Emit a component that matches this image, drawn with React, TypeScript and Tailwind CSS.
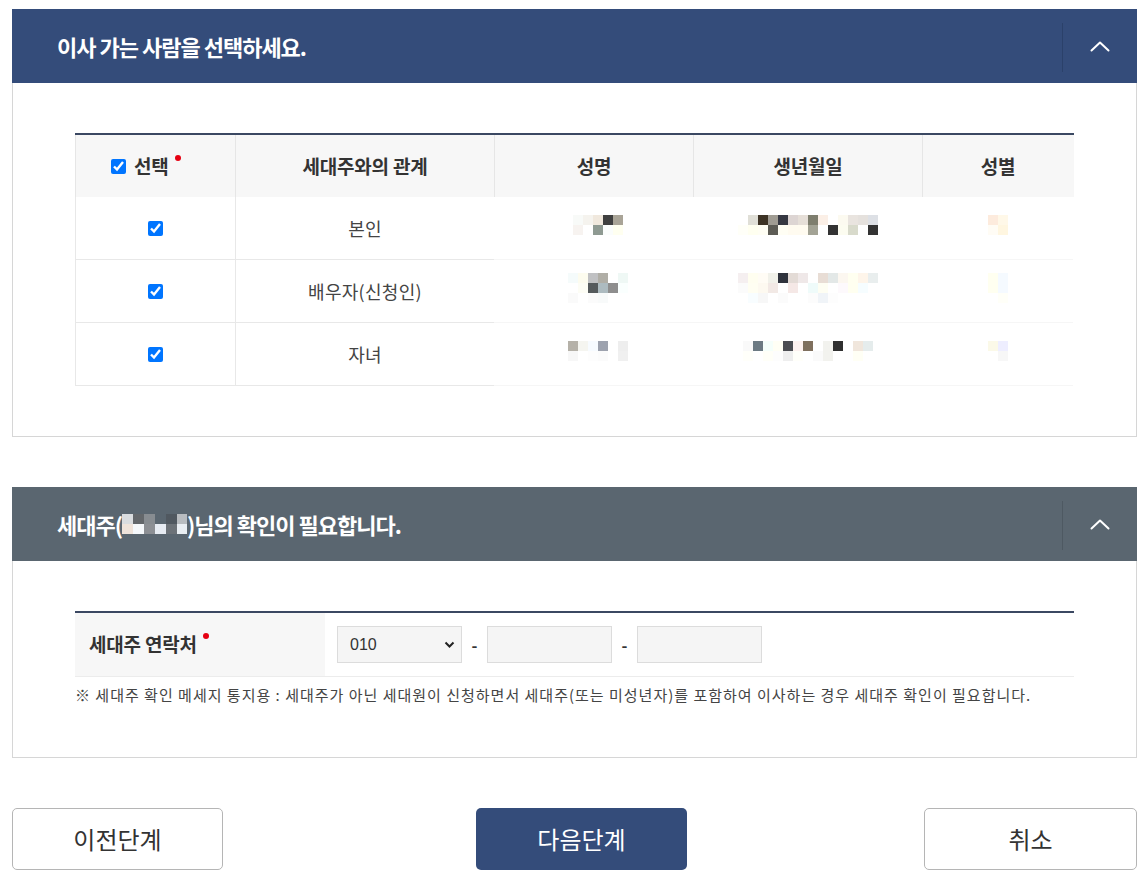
import React from "react";

type Cell = string;
type Mosaic = Cell[][];

const rows: { rel: string; name: Mosaic; birth: Mosaic; gender: Mosaic }[] = [
  {
    rel: "본인",
    name: [
      ["bg-[#f8faf8]", "bg-[#f5f3ee]", "bg-[#f0e8dd]", "bg-[#3f3f3f]", "bg-[#a9a497]"],
      ["bg-[#f7f3f0]", "bg-[#ffffff]", "bg-[#8f9a92]", "bg-[#fbfdfc]", "bg-[#fffff0]"],
    ],
    birth: [
      ["bg-[#ffffff]", "bg-[#e0dfd7]", "bg-[#3d3325]", "bg-[#a09c93]", "bg-[#363842]", "bg-[#ddd5d3]", "bg-[#e6dfd8]", "bg-[#7e7e6e]", "bg-[#fbefe6]", "bg-[#ffffff]", "bg-[#fcfaf0]", "bg-[#e9e4df]", "bg-[#e5e1dd]", "bg-[#dde0e5]"],
      ["bg-[#fffff8]", "bg-[#fffff0]", "bg-[#fffef4]", "bg-[#5d5c55]", "bg-[#fffef4]", "bg-[#fffbf0]", "bg-[#fffbf0]", "bg-[#a3a395]", "bg-[#ffffff]", "bg-[#333333]", "bg-[#fcfcf0]", "bg-[#d8dacb]", "bg-[#ffffff]", "bg-[#333333]"],
    ],
    gender: [
      ["bg-[#fdebdd]", "bg-[#fff8e8]"],
      ["bg-[#fffcf5]", "bg-[#fff6e0]"],
    ],
  },
  {
    rel: "배우자(신청인)",
    name: [
      ["bg-[#f5fbfb]", "bg-[#fdfcef]", "bg-[#c0c1c3]", "bg-[#b0aea6]", "bg-[#ffffff]", "bg-[#eff8f5]"],
      ["bg-[#ffffff]", "bg-[#fdfdf5]", "bg-[#555a5c]", "bg-[#adbbc0]", "bg-[#8e8e8e]", "bg-[#fafffe]"],
      ["bg-[#fafafa]", "bg-[#ffffff]", "bg-[#fbfbfb]", "bg-[#f8fafa]", "bg-[#ffffff]", "bg-[#ffffff]"],
    ],
    birth: [
      ["bg-[#f5eff0]", "bg-[#fffef0]", "bg-[#fffcf5]", "bg-[#f1f1ea]", "bg-[#2f333d]", "bg-[#e3dbd6]", "bg-[#efe8e8]", "bg-[#ffffff]", "bg-[#e8ddd5]", "bg-[#e3e8e7]", "bg-[#fcf7f0]", "bg-[#fffff0]", "bg-[#fef5ea]", "bg-[#e9eeee]"],
      ["bg-[#fbfbfb]", "bg-[#fffef2]", "bg-[#fdf9f0]", "bg-[#f2e9e5]", "bg-[#ffffff]", "bg-[#f5e8e6]", "bg-[#ffffff]", "bg-[#effbfa]", "bg-[#fefef3]", "bg-[#ffffff]", "bg-[#fdf9fc]", "bg-[#fffff0]", "bg-[#f6fdff]", "bg-[#ffffff]"],
      ["bg-[#ffffff]", "bg-[#f8fdff]", "bg-[#f7f7f7]", "bg-[#ffffff]", "bg-[#fbfbfb]", "bg-[#ffffff]", "bg-[#ffffff]", "bg-[#fcfcfc]", "bg-[#f0f4f8]", "bg-[#fdfdfd]", "bg-[#ffffff]", "bg-[#ffffff]", "bg-[#ffffff]", "bg-[#ffffff]"],
    ],
    gender: [
      ["bg-[#fffff0]", "bg-[#f5faff]"],
      ["bg-[#fffff0]", "bg-[#f5faff]"],
      ["bg-[#ffffff]", "bg-[#fffff8]"],
    ],
  },
  {
    rel: "자녀",
    name: [
      ["bg-[#b5b1a8]", "bg-[#f5f5f0]", "bg-[#f7fbff]", "bg-[#9da2ae]", "bg-[#ffffff]", "bg-[#eeeeee]"],
      ["bg-[#f7f7f7]", "bg-[#ffffff]", "bg-[#fdfdfd]", "bg-[#fbfbfb]", "bg-[#ffffff]", "bg-[#f0f0f0]"],
    ],
    birth: [
      ["bg-[#f9f9f9]", "bg-[#6c7a83]", "bg-[#f5fffb]", "bg-[#fffff5]", "bg-[#4c4d52]", "bg-[#fdf2f0]", "bg-[#7f705e]", "bg-[#ffffff]", "bg-[#f2f2ee]", "bg-[#2f2f2f]", "bg-[#ffffff]", "bg-[#f0e6dc]", "bg-[#e5ecec]"],
      ["bg-[#fffffa]", "bg-[#ffffff]", "bg-[#fffff8]", "bg-[#fdfdfd]", "bg-[#eeeeee]", "bg-[#fffffa]", "bg-[#ffffff]", "bg-[#fafafa]", "bg-[#f2f2ee]", "bg-[#ffffff]", "bg-[#ffffff]", "bg-[#fffff5]", "bg-[#ffffff]"],
    ],
    gender: [
      ["bg-[#fbf9e8]", "bg-[#eeeeff]"],
      ["bg-[#ffffff]", "bg-[#f7f7f7]"],
    ],
  },
];

function MosaicBlock({ m }: { m: Mosaic }) {
  return (
    <div className="flex flex-col">
      {m.map((r, i) => (
        <div key={i} className="flex">
          {r.map((c, j) => (
            <div key={j} className={`h-[10px] w-[10px] ${c}`} />
          ))}
        </div>
      ))}
    </div>
  );
}

function Chevron() {
  return (
    <svg width="20" height="12" viewBox="0 0 20 12" fill="none">
      <polyline points="1.5,10.5 10,2.5 18.5,10.5" stroke="white" strokeWidth="2" strokeLinecap="round" strokeLinejoin="round" />
    </svg>
  );
}

function PanelHeader({ bg, line, children }: { bg: string; line: string; children: React.ReactNode }) {
  return (
    <div className={`flex h-[74px] items-stretch ${bg}`}>
      <h2 className="flex flex-1 items-center pl-[45px] text-[22px] font-bold tracking-[-1px] text-white">{children}</h2>
      <div className={`mt-[14px] mb-[11px] w-px ${line}`} />
      <div className="flex w-[74px] items-center justify-center">
        <Chevron />
      </div>
    </div>
  );
}

function Dot() {
  return <span className="absolute -right-[12px] top-[3px] h-[6px] w-[6px] rounded-full bg-[#e60012]" />;
}

export default function App() {
  return (
    <div className="min-h-screen bg-white pt-[9px] pl-[12px] pr-[6px] font-['Noto_Sans_CJK_KR',sans-serif] text-[#333]">
      {/* Panel 1 */}
      <section>
        <PanelHeader bg="bg-[#344c7a]" line="bg-[#2b416a]">이사 가는 사람을 선택하세요.</PanelHeader>
        <div className="border-x border-b border-[#d6d6d6] px-[62px] pt-[50px] pb-[50px]">
          <div className="border-t-2 border-[#3b4862]">
            <div className="grid h-[62px] grid-cols-[160px_259px_199px_229px_151px] bg-[#f7f7f7] text-[19px] font-bold tracking-[-0.2px] text-[#333]">
              <div className="flex items-center border-l border-[#e6e6e6] pl-[35px]">
                <input type="checkbox" defaultChecked className="h-[15px] w-[15px]" />
                <span className="relative ml-[8px]">
                  선택
                  <Dot />
                </span>
              </div>
              <div className="flex items-center justify-center border-l border-[#e6e6e6]">세대주와의 관계</div>
              <div className="flex items-center justify-center border-l border-[#e6e6e6]">성명</div>
              <div className="flex items-center justify-center border-l border-[#e6e6e6]">생년월일</div>
              <div className="flex items-center justify-center border-l border-[#e6e6e6]">성별</div>
            </div>
            {rows.map((r, i) => (
              <div key={i} className="grid h-[63px] grid-cols-[160px_259px_199px_229px_151px] text-[18px] tracking-[0.3px] text-[#444]">
                <div className="flex items-center justify-center border-b border-l border-[#e8e8e8]">
                  <input type="checkbox" defaultChecked className="h-[15px] w-[15px]" />
                </div>
                <div className="flex items-center justify-center border-b border-l border-[#e8e8e8]">{r.rel}</div>
                <div className="flex items-center justify-center border-b border-[#f6f6f6] pb-[6px] pl-[8px]">
                  <MosaicBlock m={r.name} />
                </div>
                <div className="flex items-center justify-center border-b border-[#f6f6f6] pb-[6px]">
                  <MosaicBlock m={r.birth} />
                </div>
                <div className="flex items-center justify-center border-b border-[#f6f6f6] pb-[6px]">
                  <MosaicBlock m={r.gender} />
                </div>
              </div>
            ))}
          </div>
        </div>
      </section>

      {/* Panel 2 */}
      <section className="mt-[50px]">
        <PanelHeader bg="bg-[#5a6670]" line="bg-[#4e5962]">
          <span>세대주(</span>
          <span className="flex flex-col">
            <span className="flex">
              <span className="h-[10px] w-[11px] bg-[#d9dcdf]" />
              <span className="h-[10px] w-[11px] bg-[#63676b]" />
              <span className="h-[10px] w-[11px] bg-[#878c91]" />
              <span className="h-[10px] w-[11px] bg-[#5a6670]" />
              <span className="h-[10px] w-[11px] bg-[#505860]" />
              <span className="h-[10px] w-[10px] bg-[#b8bcc0]" />
            </span>
            <span className="flex">
              <span className="h-[10px] w-[11px] bg-[#efe3da]" />
              <span className="h-[10px] w-[11px] bg-[#f5f8fb]" />
              <span className="h-[10px] w-[11px] bg-[#8c8f94]" />
              <span className="h-[10px] w-[11px] bg-[#e6ebf2]" />
              <span className="h-[10px] w-[11px] bg-[#6c7278]" />
              <span className="h-[10px] w-[10px] bg-[#e9eef3]" />
            </span>
          </span>
          <span>)님의 확인이 필요합니다.</span>
        </PanelHeader>
        <div className="border-x border-b border-[#d6d6d6] px-[62px] pt-[50px] pb-[50px]">
          <div className="border-t-2 border-[#3b4862]">
            <div className="flex h-[64px] border-b border-[#ececec]">
              <div className="flex w-[250px] items-center bg-[#f7f7f7] pl-[14px] text-[19px] font-bold tracking-[-0.2px] text-[#333]">
                <span className="relative">
                  세대주 연락처
                  <Dot />
                </span>
              </div>
              <div className="flex items-center pl-[12px] text-[16px] text-[#333]">
                <div className="flex h-[37px] w-[125px] items-center justify-between border border-[#dcdcdc] bg-[#f5f5f5] pl-[12px] pr-[6px] font-['Liberation_Sans',sans-serif]">
                  <span className="pt-[1px]">010</span>
                  <svg width="11" height="8" viewBox="0 0 11 8" fill="none">
                    <polyline points="1.5,1.5 5.5,5.5 9.5,1.5" stroke="#222" strokeWidth="2" />
                  </svg>
                </div>
                <span className="w-[25px] text-center font-bold">-</span>
                <div className="h-[37px] w-[125px] border border-[#dcdcdc] bg-[#f5f5f5]" />
                <span className="w-[25px] text-center font-bold">-</span>
                <div className="h-[37px] w-[125px] border border-[#dcdcdc] bg-[#f5f5f5]" />
              </div>
            </div>
          </div>
          <p className="mt-[7px] text-[15px] tracking-[1px] text-[#444]">
            ※ 세대주 확인 메세지 통지용 : 세대주가 아닌 세대원이 신청하면서 세대주(또는 미성년자)를 포함하여 이사하는 경우 세대주 확인이 필요합니다.
          </p>
        </div>
      </section>

      {/* Buttons */}
      <div className="mt-[50px] flex justify-between">
        <button className="h-[62px] w-[211px] rounded-[5px] border border-[#b5b5b5] bg-white text-[24px] text-[#333]">이전단계</button>
        <button className="ml-[16px] h-[62px] w-[211px] rounded-[5px] bg-[#344c7a] text-[24px] text-white">다음단계</button>
        <button className="h-[62px] w-[213px] rounded-[5px] border border-[#b5b5b5] bg-white text-[24px] text-[#333]">취소</button>
      </div>
    </div>
  );
}
